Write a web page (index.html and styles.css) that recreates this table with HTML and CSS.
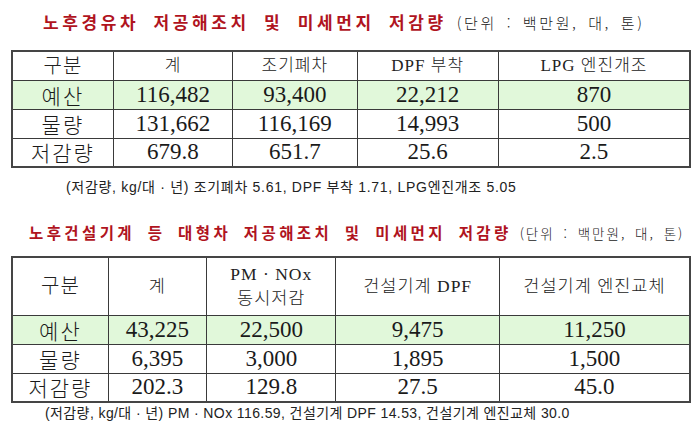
FILE: index.html
```html
<!DOCTYPE html>
<html lang="ko">
<head>
<meta charset="utf-8">
<link rel="stylesheet" href="styles.css">
</head>
<body>
<div class="page">
  <h2 class="title t1"><span class="red">노후경유차 저공해조치 및 미세먼지 저감량</span> <span class="unit">(단위 : 백만원, 대, 톤)</span></h2>
  <table class="grid g1">
    <colgroup><col style="width:101px"><col style="width:119px"><col style="width:124px"><col style="width:141px"><col style="width:191px"></colgroup>
    <tr class="head"><td>구분</td><td>계</td><td>조기폐차</td><td>DPF 부착</td><td>LPG 엔진개조</td></tr>
    <tr class="green"><td class="lab">예산</td><td>116,482</td><td>93,400</td><td>22,212</td><td>870</td></tr>
    <tr><td class="lab">물량</td><td>131,662</td><td>116,169</td><td>14,993</td><td>500</td></tr>
    <tr><td class="lab">저감량</td><td>679.8</td><td>651.7</td><td>25.6</td><td>2.5</td></tr>
  </table>
  <p class="note n1">(저감량, kg/대 · 년) 조기폐차 5.61, DPF 부착 1.71, LPG엔진개조 5.05</p>

  <h2 class="title t2"><span class="red">노후건설기계 등 대형차 저공해조치 및 미세먼지 저감량</span> <span class="unit">(단위 : 백만원, 대, 톤)</span></h2>
  <table class="grid g2">
    <colgroup><col style="width:96px"><col style="width:98px"><col style="width:129px"><col style="width:163px"><col style="width:190px"></colgroup>
    <tr class="head tall"><td>구분</td><td>계</td><td>PM · NOx<br>동시저감</td><td>건설기계 DPF</td><td>건설기계 엔진교체</td></tr>
    <tr class="green"><td class="lab">예산</td><td>43,225</td><td>22,500</td><td>9,475</td><td>11,250</td></tr>
    <tr><td class="lab">물량</td><td>6,395</td><td>3,000</td><td>1,895</td><td>1,500</td></tr>
    <tr><td class="lab">저감량</td><td>202.3</td><td>129.8</td><td>27.5</td><td>45.0</td></tr>
  </table>
  <p class="note n2">(저감량, kg/대 · 년) PM · NOx 116.59, 건설기계 DPF 14.53, 건설기계 엔진교체 30.0</p>
</div>
</body>
</html>
```
FILE: styles.css
```css
* { box-sizing: border-box; }
html, body { margin: 0; padding: 0; background: #fff; }
body {
  width: 699px;
  height: 431px;
  overflow: hidden;
  font-family: "Liberation Serif", "Noto Sans CJK KR", serif;
  color: #1a1a1a;
}
.page { padding: 0 0 0 11px; }
.title {
  margin: 0;
  font-weight: normal;
  white-space: nowrap;
  line-height: 24px;
  overflow: hidden;
}
.t1 { padding: 9px 0 0 32px; height: 50px; }
.t2 { padding: 0 0 0 18px; height: 37px; }
.red {
  color: #b0141e;
  font-family: "Noto Sans CJK KR", sans-serif;
  font-weight: bold;
  font-size: 17px;
  letter-spacing: 3.6px;
  word-spacing: 6px;
}
.t2 .red { font-size: 15.5px; letter-spacing: 3.4px; word-spacing: 5px; }
.unit {
  font-family: "Noto Sans CJK KR", sans-serif;
  font-weight: 300;
  font-size: 15px;
  color: #222;
  letter-spacing: 2.6px;
  word-spacing: 3px;
  margin-left: 4px;
}
.t2 .unit { font-size: 13.5px; letter-spacing: 2px; margin-left: 2px; }
.grid {
  border-collapse: collapse;
  table-layout: fixed;
  width: 680px;
  border: 2px solid #454545;
}
.grid td {
  border: 1px solid #3a3a3a;
  text-align: center;
  vertical-align: middle;
  padding: 0;
  height: 29px;
  font-size: 23px;
  line-height: 26px;
  white-space: nowrap;
}
.grid .head td {
  font-size: 17px;
  font-weight: 300;
  color: #222;
}
.grid .head td:first-child { font-size: 20px; }
.g1 .head td { letter-spacing: 1px; }
.g2 .head td { font-size: 17.5px; line-height: 24px; letter-spacing: 1px; }
.g2 .head td:first-child { font-size: 20px; }
.grid .tall td { height: 58px; }
.grid .lab {
  font-family: "Noto Sans CJK KR", sans-serif;
  font-weight: 300;
  font-size: 21px;
  letter-spacing: 2px;
}
.green td { background: #e1f8da; }
.note {
  margin: 0;
  font-family: "Liberation Sans", "Noto Sans CJK KR", sans-serif;
  font-size: 14px;
  line-height: 18px;
  color: #222;
  white-space: nowrap;
}
.n1 { padding: 10px 0 0 55px; height: 51px; letter-spacing: 0.7px; }
.n2 { padding: 1px 0 0 34px; letter-spacing: 0.4px; }
```
